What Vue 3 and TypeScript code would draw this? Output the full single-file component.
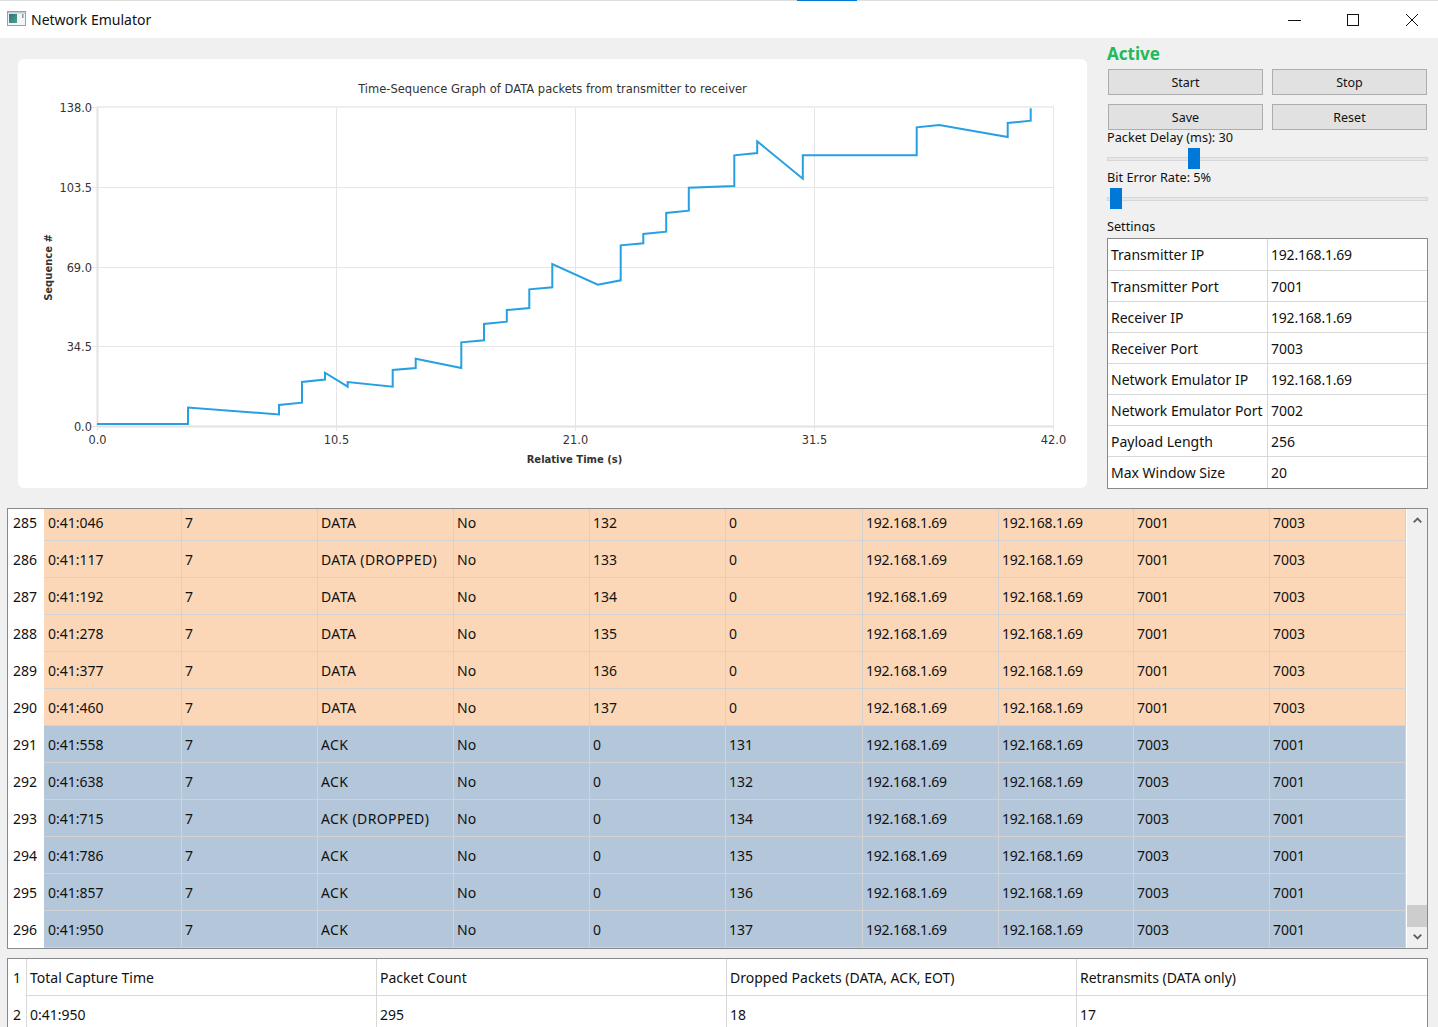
<script setup lang="ts">
import { computed } from 'vue'

const plotLine = [
  [97, 424], [188, 424], [188, 407.5], [279, 414.5], [279, 405], [302, 402.7], [302, 382], [325, 379.5],
  [325, 372.7], [347.7, 386.7], [347.7, 382], [392.7, 386.7], [392.7, 370], [415.7, 368], [415.7, 358.7],
  [461.3, 368], [461.3, 342.3], [484, 340.3], [484, 324], [506.8, 321.7], [506.8, 310], [529.3, 308],
  [529.3, 289.3], [552.3, 287.3], [552.3, 264], [597.8, 284.7], [620.7, 280.3], [620.7, 245.3], [643.3, 243.3],
  [643.3, 234], [666.2, 231.7], [666.2, 213], [688.8, 210.7], [688.8, 187.7], [734.3, 186], [734.3, 155.3],
  [757.2, 153], [757.2, 141.3], [802.8, 178.7], [802.8, 155.3], [916.7, 155.3], [916.7, 127.3], [939.3, 125],
  [1007.7, 137], [1007.7, 123], [1030.7, 120.7], [1030.7, 108.3],
]
const linePoints = computed(() => plotLine.map((p) => p.join(',')).join(' '))

const xTicks = [
  { x: 97, label: '0.0' },
  { x: 336, label: '10.5' },
  { x: 575, label: '21.0' },
  { x: 814, label: '31.5' },
  { x: 1053, label: '42.0' },
]
const yTicks = [
  { y: 107, label: '138.0' },
  { y: 187, label: '103.5' },
  { y: 267, label: '69.0' },
  { y: 346, label: '34.5' },
  { y: 426, label: '0.0' },
]

const settings = [
  ['Transmitter IP', '192.168.1.69'],
  ['Transmitter Port', '7001'],
  ['Receiver IP', '192.168.1.69'],
  ['Receiver Port', '7003'],
  ['Network Emulator IP', '192.168.1.69'],
  ['Network Emulator Port', '7002'],
  ['Payload Length', '256'],
  ['Max Window Size', '20'],
]

const sliders = [
  { label: 'Packet Delay (ms): 30', left: 81 },
  { label: 'Bit Error Rate: 5%', left: 3 },
]

type Packet = { n: number; time: string; type: string; seq: number; ack: number; data: boolean }

const packets: Packet[] = [
  { n: 285, time: '0:41:046', type: 'DATA', seq: 132, ack: 0, data: true },
  { n: 286, time: '0:41:117', type: 'DATA (DROPPED)', seq: 133, ack: 0, data: true },
  { n: 287, time: '0:41:192', type: 'DATA', seq: 134, ack: 0, data: true },
  { n: 288, time: '0:41:278', type: 'DATA', seq: 135, ack: 0, data: true },
  { n: 289, time: '0:41:377', type: 'DATA', seq: 136, ack: 0, data: true },
  { n: 290, time: '0:41:460', type: 'DATA', seq: 137, ack: 0, data: true },
  { n: 291, time: '0:41:558', type: 'ACK', seq: 0, ack: 131, data: false },
  { n: 292, time: '0:41:638', type: 'ACK', seq: 0, ack: 132, data: false },
  { n: 293, time: '0:41:715', type: 'ACK (DROPPED)', seq: 0, ack: 134, data: false },
  { n: 294, time: '0:41:786', type: 'ACK', seq: 0, ack: 135, data: false },
  { n: 295, time: '0:41:857', type: 'ACK', seq: 0, ack: 136, data: false },
  { n: 296, time: '0:41:950', type: 'ACK', seq: 0, ack: 137, data: false },
]

const cellsFor = (p: Packet) => [
  p.time, '7', p.type, 'No', String(p.seq), String(p.ack), '192.168.1.69', '192.168.1.69',
  p.data ? '7001' : '7003', p.data ? '7003' : '7001',
]

const summary = [
  ['Total Capture Time', 'Packet Count', 'Dropped Packets (DATA, ACK, EOT)', 'Retransmits (DATA only)'],
  ['0:41:950', '295', '18', '17'],
]
</script>

<template>
  <div class="window">
    <div class="top-line"><span class="top-accent"></span></div>
    <header class="titlebar">
      <svg class="app-icon" width="19" height="15" viewBox="0 0 19 15">
        <defs>
          <linearGradient id="iconFill" x1="0" y1="0" x2="1" y2="1">
            <stop offset="0" stop-color="#2f6f92" />
            <stop offset="1" stop-color="#48a878" />
          </linearGradient>
        </defs>
        <rect x="0.5" y="0.5" width="18" height="14" fill="#f3f5f7" stroke="#9aa0a6" />
        <rect x="1" y="1" width="17" height="1.5" fill="#c4c9ce" />
        <rect x="2" y="3" width="8" height="9" fill="url(#iconFill)" />
        <rect x="15" y="3" width="1.5" height="4" fill="#7d98ae" />
      </svg>
      <span class="app-title">Network Emulator</span>
      <div class="controls">
        <svg width="14" height="14" viewBox="0 0 14 14"><path d="M1 7.5H14" stroke="#111" fill="none" /></svg>
        <svg width="14" height="14" viewBox="0 0 14 14"><rect x="1.5" y="1.5" width="11" height="11" stroke="#111" fill="none" /></svg>
        <svg width="14" height="14" viewBox="0 0 14 14"><path d="M1 1L13 13M13 1L1 13" stroke="#111" fill="none" /></svg>
      </div>
    </header>

    <main class="content">
      <section class="top-row">
        <div class="chart-card">
          <svg class="chart" width="1069" height="429" viewBox="18 59 1069 429">
            <text class="chart-title" x="552.5" y="93" text-anchor="middle">Time-Sequence Graph of DATA packets from transmitter to receiver</text>
            <g v-for="t in xTicks" :key="t.x">
              <line :x1="t.x + 0.5" :x2="t.x + 0.5" y1="107" y2="431" class="grid" />
              <text class="tick" :x="t.x + 0.5" y="444" text-anchor="middle">{{ t.label }}</text>
            </g>
            <g v-for="t in yTicks" :key="t.y">
              <line x1="92" x2="1054" :y1="t.y + 0.5" :y2="t.y + 0.5" class="grid" />
              <text class="tick" x="92" :y="t.y + 5" text-anchor="end">{{ t.label }}</text>
            </g>
            <line x1="97.5" x2="97.5" y1="107" y2="427" class="axis" />
            <line x1="97" x2="1054" y1="426.5" y2="426.5" class="axis" />
            <line x1="97" x2="1054" y1="107" y2="107" class="axis top" />
            <polyline class="series" :points="linePoints" />
            <text class="axis-title" x="574.5" y="463" text-anchor="middle">Relative Time (s)</text>
            <text class="axis-title" transform="translate(52 267.5) rotate(-90)" text-anchor="middle">Sequence #</text>
          </svg>
        </div>

        <aside class="side">
          <div class="status">Active</div>
          <div class="buttons">
            <button>Start</button>
            <button>Stop</button>
            <button>Save</button>
            <button>Reset</button>
          </div>
          <div v-for="s in sliders" :key="s.label" class="slider-block">
            <div class="slider-label">{{ s.label }}</div>
            <div class="slider">
              <div class="groove"></div>
              <div class="handle" :style="{ left: s.left + 'px' }"></div>
            </div>
          </div>
          <div class="settings-label">Settings</div>
          <div class="settings">
            <div v-for="row in settings" :key="row[0]" class="settings-row">
              <div class="cell">{{ row[0] }}</div>
              <div class="cell" :class="{ 'col-ip': row[1].includes('.') }">{{ row[1] }}</div>
            </div>
          </div>
        </aside>
      </section>

      <section class="packets">
        <div class="packet-view">
          <div class="packet-rows">
            <div v-for="p in packets" :key="p.n" class="packet-row" :class="p.data ? 'is-data' : 'is-ack'">
              <div class="row-head">{{ p.n }}</div>
              <div
                v-for="(c, i) in cellsFor(p)"
                :key="i"
                class="cell"
                :class="{ 'col-type': i === 2, 'col-ip': i === 6 || i === 7 }"
              >{{ c }}</div>
            </div>
          </div>
        </div>
        <div class="scrollbar">
          <svg class="arrow-up" width="9" height="6" viewBox="0 0 9 6"><path d="M0.7 5.3L4.5 1.5L8.3 5.3" stroke="#606060" stroke-width="1.8" fill="none" /></svg>
          <div class="thumb"></div>
          <svg class="arrow-down" width="9" height="6" viewBox="0 0 9 6"><path d="M0.7 0.7L4.5 4.5L8.3 0.7" stroke="#606060" stroke-width="1.8" fill="none" /></svg>
        </div>
      </section>

      <section class="summary">
        <div v-for="(row, r) in summary" :key="r" class="summary-row">
          <div class="summary-head">{{ r + 1 }}</div>
          <div v-for="c in row" :key="c" class="cell">{{ c }}</div>
        </div>
      </section>
    </main>
  </div>
</template>

<style>
html,
body {
  margin: 0;
  background: #f0f0f0;
}
</style>

<style scoped>
.window {
  width: 1438px;
  height: 1027px;
  overflow: hidden;
  background: #f0f0f0;
  font-family: "Noto Sans", "Open Sans", sans-serif;
  color: #111;
  display: flex;
  flex-direction: column;
}

.top-line {
  height: 1px;
  flex-shrink: 0;
  background: #dedede;
  display: flex;
}

.top-accent {
  width: 60px;
  margin-left: 797px;
  background: #0078d7;
}

.titlebar {
  height: 37px;
  background: #fff;
  display: flex;
  align-items: center;
  flex-shrink: 0;
}

.app-icon {
  margin-left: 7px;
  margin-bottom: 2px;
}

.app-title {
  margin-left: 5px;
  font-size: 14px;
  margin-top: -1px;
}

.controls {
  margin-left: auto;
  margin-right: 19px;
  display: flex;
  gap: 45px;
}

.content {
  padding: 7px 10px 0 7px;
  display: flex;
  flex-direction: column;
}

.top-row {
  display: flex;
  gap: 20px;
}

.chart-card {
  width: 1069px;
  height: 429px;
  margin: 14px 0 0 11px;
  background: #fff;
  border-radius: 6px;
  overflow: hidden;
}

.chart {
  display: block;
}

.chart text {
  font-family: "DejaVu Sans", sans-serif;
  fill: #333;
}

.chart-title {
  font-size: 11.5px;
}

.tick {
  font-size: 11.4px;
}

.axis-title {
  font-size: 10px;
  font-weight: 700;
}

.grid {
  stroke: #e6e6e6;
  stroke-width: 1;
}

.axis {
  stroke: #e2e2e2;
  stroke-width: 2;
}

.axis.top {
  stroke: #eee;
}

.series {
  fill: none;
  stroke: #26a0e2;
  stroke-width: 2;
  stroke-linejoin: miter;
}

.side {
  width: 321px;
  display: flex;
  flex-direction: column;
}

.status {
  height: 19px;
  line-height: 17px;
  font-size: 17px;
  font-weight: 700;
  color: #22b95a;
}

.buttons {
  margin: 5px 0 0 1px;
  display: grid;
  grid-template-columns: 155px 155px;
  grid-auto-rows: 26px;
  gap: 9px;
}

.buttons button {
  background: #e1e1e1;
  border: 1px solid #adadad;
  border-radius: 0;
  padding: 0;
  font: 12.5px "Noto Sans", "Open Sans", sans-serif;
  color: #111;
}

.slider-block + .slider-block {
  margin-top: 1px;
}

.slider-label {
  height: 14px;
  line-height: 14px;
  font-size: 12.7px;
}

.slider {
  position: relative;
  height: 21px;
  margin: 4px 0 0;
  display: flex;
  align-items: center;
}

.groove {
  width: 100%;
  height: 4px;
  background: #e7e7e7;
  border: 1px solid #d6d6d6;
  box-sizing: border-box;
}

.handle {
  position: absolute;
  top: 0;
  width: 12px;
  height: 21px;
  background: #0078d7;
}

.settings-label {
  margin-top: 10px;
  height: 13px;
  line-height: 14px;
  font-size: 12.7px;
  overflow: hidden;
}

.settings {
  margin-top: 6px;
  border: 1px solid #8a8a8a;
  background: #fff;
}

.settings-row {
  display: grid;
  grid-template-columns: 160px 159px;
  height: 31px;
  box-sizing: border-box;
  border-bottom: 1px solid #d8d8d8;
}

.settings-row:first-child {
  height: 32px;
}

.settings-row:last-child {
  border-bottom: 0;
}

.settings-row .cell:first-child {
  border-right: 1px solid #d8d8d8;
}

.cell {
  padding-left: 3px;
  font-size: 14px;
  display: flex;
  align-items: center;
  white-space: nowrap;
  overflow: hidden;
}

.col-type {
  letter-spacing: 0.4px;
}

.col-ip {
  letter-spacing: -0.2px;
}

.packets {
  margin-top: 19px;
  height: 441px;
  box-sizing: border-box;
  border: 1px solid #8a8a8a;
  background: #fff;
  display: flex;
  flex-shrink: 0;
}

.packet-view {
  width: 1398px;
  overflow: hidden;
}

.packet-rows {
  margin-top: -5px;
}

.packet-row {
  display: grid;
  grid-template-columns: 36px 138px 136px 136px 136px 136px 137px 136px 135px 136px 136px;
  height: 37px;
}

.row-head {
  background: #fff;
  font-size: 14px;
  padding-right: 2px;
  display: flex;
  align-items: center;
  justify-content: center;
}

.packet-row .cell {
  box-sizing: border-box;
  border-right: 1px solid #d2d2d2;
  border-bottom: 1px solid #d2d2d2;
}

.packet-row .row-head + .cell {
  padding-left: 4px;
}

.is-data .cell {
  background: #fbd7b7;
}

.is-ack .cell {
  background: #b4c6d9;
}

.scrollbar {
  width: 20px;
  margin-left: 1px;
  background: #f0f0f0;
  display: flex;
  flex-direction: column;
  align-items: center;
}

.arrow-up {
  margin-top: 8px;
}

.thumb {
  width: 100%;
  height: 22px;
  margin-top: auto;
  background: #cdcdcd;
}

.arrow-down {
  margin: 7px 0 8px;
}

.summary {
  margin-top: 9px;
  box-sizing: border-box;
  border: 1px solid #8a8a8a;
  background: #fff;
}

.summary-row {
  display: grid;
  grid-template-columns: 19px 350px 350px 350px 350px;
  height: 37px;
}

.summary-head {
  box-sizing: border-box;
  border-right: 1px solid #d8d8d8;
  font-size: 14px;
  display: flex;
  align-items: center;
  justify-content: center;
}

.summary-row .cell {
  box-sizing: border-box;
  border-right: 1px solid #d8d8d8;
  border-bottom: 1px solid #d8d8d8;
}

.summary-row .cell:last-child {
  border-right: 0;
}
</style>
